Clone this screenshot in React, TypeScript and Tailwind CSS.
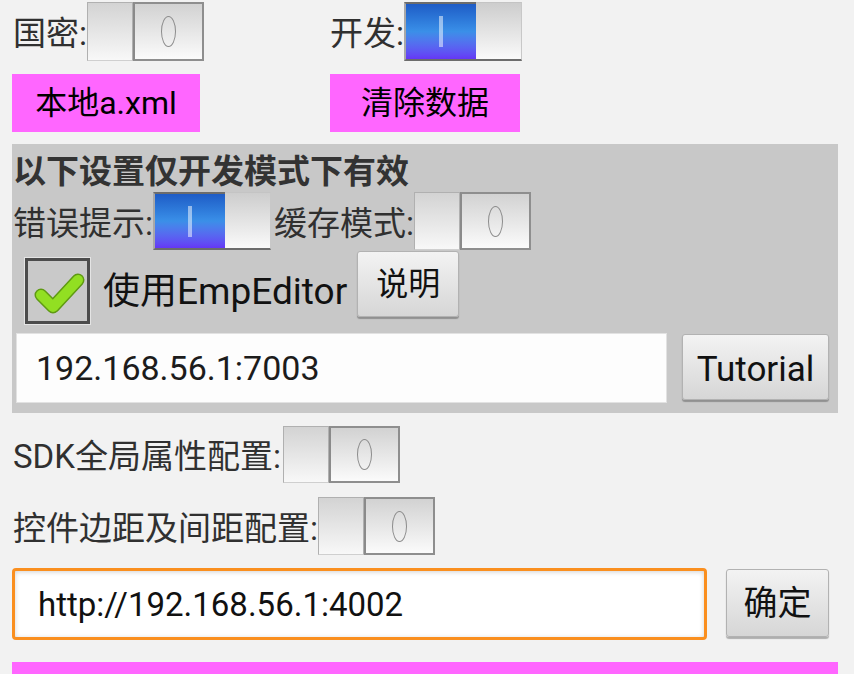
import React from 'react'

function Toggle({ on = false, h = 'h-[58px]' }: { on?: boolean; h?: string }) {
  if (on) {
    return (
      <div className={`flex w-[118px] ${h} shrink-0`}>
        <div className="relative w-[72px] h-full border-y-2 border-y-[#6c6c6c] border-l-2 border-l-[#a8a8a8] bg-gradient-to-b from-[#1f5cc6] via-[#3a8fe8] to-[#6536f6] flex items-center justify-center">
          <div className="w-[4px] h-[31px] bg-white/50" />
        </div>
        <div className="w-[46px] h-full border-t border-t-[#c4c4c4] border-r border-r-[#c8c8c8] border-b-2 border-b-[#6c6c6c] bg-gradient-to-b from-[#cdcdcd] to-[#fafafa]" />
      </div>
    )
  }
  return (
    <div className={`flex w-[117px] ${h} shrink-0`}>
      <div className="w-[46px] h-full border border-[#b0b0b0] border-b-[#cfcfcf] bg-gradient-to-b from-[#d3d3d3] to-[#f8f8f8]" />
      <div className="flex-1 h-full border-y-2 border-r-2 border-[#8e8e8e] border-l-2 border-l-[#8a8a8a] bg-gradient-to-b from-[#d2d2d2] to-[#fbfbfb] flex items-center justify-center">
        <div className="w-[15px] h-[31px] rounded-[50%] border-[1.5px] border-[#8c8c8c]" />
      </div>
    </div>
  )
}

function Label({ children }: { children: React.ReactNode }) {
  return <span className="text-[33px] leading-none text-[#303030] whitespace-nowrap pt-[4px]">{children}</span>
}

function GrayButton({ children, className }: { children: React.ReactNode; className: string }) {
  return (
    <div
      className={`flex items-center justify-center shrink-0 rounded-[3px] border border-[#b2b2b2] bg-gradient-to-b from-[#f3f3f3] to-[#d6d6d6] shadow-[0_2px_1px_rgba(0,0,0,0.28)] text-[#111] leading-none ${className}`}
    >
      {children}
    </div>
  )
}

export default function App() {
  return (
    <div className="w-[854px] h-[674px] overflow-hidden bg-[#f2f2f2] pl-[12px] font-['Roboto','Noto_Sans_CJK_SC',sans-serif]">
      {/* top switches */}
      <div className="flex mt-[2px] h-[59px]">
        <div className="w-[318px] flex items-center pl-[1px]">
          <Label>国密:</Label>
          <Toggle h="h-[59px]" />
        </div>
        <div className="flex items-center">
          <Label>开发:</Label>
          <Toggle on h="h-[59px]" />
        </div>
      </div>

      <div className="flex mt-[13px]">
        <div className="w-[188px] h-[58px] bg-[#ff66ff] flex items-center justify-center text-[32px] leading-none text-black">
          本地a.xml
        </div>
        <div className="ml-[130px] w-[190px] h-[58px] bg-[#ff66ff] flex items-center justify-center text-[32px] leading-none text-black">
          清除数据
        </div>
      </div>

      {/* dev panel */}
      <div className="mt-[12px] w-[826px] h-[269px] bg-[#c8c8c8] pt-[7px]">
        <div className="h-[40px] pl-[1px] flex items-center text-[33px] font-bold leading-none text-[#333]">
          以下设置仅开发模式下有效
        </div>
        <div className="mt-[1px] h-[58px] flex items-center pl-[1px]">
          <Label>错误提示:</Label>
          <Toggle on />
          <span className="ml-[3px] flex items-center">
            <Label>缓存模式:</Label>
          </span>
          <Toggle />
        </div>
        <div className="h-[75px] flex items-start">
          <div className="ml-[12px] mt-[7px] w-[67px] h-[68px] border border-[#e4e4e4] shrink-0">
            <div className="w-full h-full border-[3px] border-[#4c4c4c] bg-[#c9c9c9]">
              <svg width="61" height="62" viewBox="0 0 61 62">
                <path d="M13 34 L25 46 L50 19" fill="none" stroke="#5f9a12" strokeWidth="13" strokeLinecap="round" strokeLinejoin="round" />
                <path d="M13 34 L25 46 L50 19" fill="none" stroke="#92df22" strokeWidth="10" strokeLinecap="round" strokeLinejoin="round" />
              </svg>
            </div>
          </div>
          <div className="ml-[12px] h-[82px] flex items-center text-[37px] leading-none text-[#111] whitespace-nowrap">
            使用EmpEditor
          </div>
          <GrayButton className="ml-[10px] mt-[1px] w-[102px] h-[66px] text-[32px]">说明</GrayButton>
        </div>
        <div className="flex mt-[8px]">
          <div className="ml-[4px] w-[651px] h-[70px] bg-[#fdfdfd] border border-[#e2e2e2] flex items-center pl-[19px] text-[34px] leading-none text-[#1c1c1c]">
            192.168.56.1:7003
          </div>
          <GrayButton className="ml-[15px] mt-[1px] w-[147px] h-[66px] text-[35px] pt-[4px]">Tutorial</GrayButton>
        </div>
      </div>

      {/* sdk switches */}
      <div className="mt-[13px] h-[57px] flex items-center pl-[1px]">
        <Label>SDK全局属性配置:</Label>
        <span className="ml-[2px]">
          <Toggle h="h-[57px]" />
        </span>
      </div>
      <div className="mt-[14px] h-[58px] flex items-center pl-[1px]">
        <Label>控件边距及间距配置:</Label>
        <Toggle />
      </div>

      <div className="flex mt-[13px]">
        <div className="w-[695px] h-[72px] rounded-[4px] border-[3px] border-[#fa8f1f] bg-white shadow-[inset_0_1px_5px_rgba(0,0,0,0.18)] flex items-center pl-[23px] text-[33px] leading-none text-[#111]">
          http://192.168.56.1:4002
        </div>
        <GrayButton className="ml-[19px] mt-[1px] w-[103px] h-[68px] text-[34px]">确定</GrayButton>
      </div>

      <div className="mt-[22px] w-[826px] h-[12px] bg-[#ff66ff]" />
    </div>
  )
}
